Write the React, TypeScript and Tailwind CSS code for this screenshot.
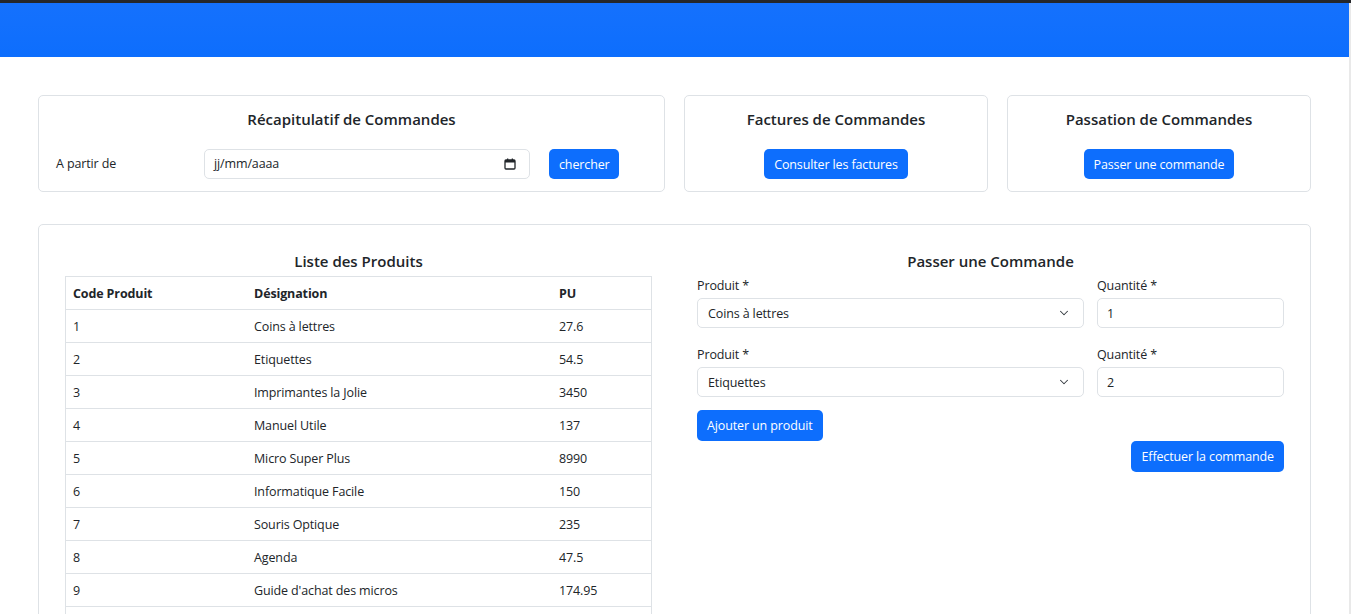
import { ChevronDown } from "lucide-react";

const produits = [
  { code: "1", nom: "Coins à lettres", pu: "27.6" },
  { code: "2", nom: "Etiquettes", pu: "54.5" },
  { code: "3", nom: "Imprimantes la Jolie", pu: "3450" },
  { code: "4", nom: "Manuel Utile", pu: "137" },
  { code: "5", nom: "Micro Super Plus", pu: "8990" },
  { code: "6", nom: "Informatique Facile", pu: "150" },
  { code: "7", nom: "Souris Optique", pu: "235" },
  { code: "8", nom: "Agenda", pu: "47.5" },
  { code: "9", nom: "Guide d'achat des micros", pu: "174.95" },
  { code: "10", nom: "Cartouche d'encre", pu: "42" },
];

const Btn = ({ children, className = "" }: { children: React.ReactNode; className?: string }) => (
  <button className={`bg-[#0d6efd] text-white text-[12.5px] leading-[19px] rounded-[5px] px-[10px] ${className}`}>
    {children}
  </button>
);

const Card = ({ children, className = "" }: { children: React.ReactNode; className?: string }) => (
  <div className={`border border-[#dee2e6] rounded-[5px] bg-white ${className}`}>{children}</div>
);

const Title = ({ children }: { children: React.ReactNode }) => (
  <h5 className="text-[15px] leading-[19px] font-semibold tracking-normal text-center text-[#212529]">{children}</h5>
);

const CalendarIcon = () => (
  <svg width="12" height="12" viewBox="0 0 12 12" fill="none">
    <rect x="1" y="2" width="10" height="9" rx="1" stroke="#212529" strokeWidth="1.3" />
    <rect x="1" y="2" width="10" height="2.5" fill="#212529" />
    <rect x="3" y="0.5" width="1.3" height="2" fill="#212529" />
    <rect x="7.7" y="0.5" width="1.3" height="2" fill="#212529" />
  </svg>
);

const SelectBox = ({ value }: { value: string }) => (
  <div className="h-[30px] border border-[#dee2e6] rounded-[5px] flex items-center justify-between pl-[10px] pr-[12px]">
    <span className="pt-[2px]">{value}</span>
    <ChevronDown className="w-[14px] h-[14px] text-[#343a40]" strokeWidth={1.8} />
  </div>
);

const InputBox = ({ value }: { value: string }) => (
  <div className="h-[30px] border border-[#dee2e6] rounded-[5px] flex items-center pl-[9px] pt-[2px]">{value}</div>
);

const Label = ({ children }: { children: React.ReactNode }) => (
  <label className="block leading-[19px] mb-[3px] pt-[1px] -mt-[1px]">{children}</label>
);

export default function App() {
  return (
    <div className="min-h-screen bg-white text-[#212529] font-['Open_Sans','Noto_Sans',sans-serif] text-[12.5px] tracking-[-0.01em]">
      <div className="h-[3px] bg-[#25272b]" />
      <div className="flex">
        <div className="flex-1">
          <nav className="h-[54px] bg-gradient-to-b from-[#1571fd] to-[#0d6efd]" />
          <main className="px-[38px] pt-[38px] pb-10">
            <div className="grid grid-cols-[627px_1fr_1fr] gap-[19px]">
              <Card className="px-[13px] pt-[14px] pb-[12px]">
                <Title>Récapitulatif de Commandes</Title>
                <div className="flex items-center mt-[20px]">
                  <span className="pl-[4px] w-[152px]">A partir de</span>
                  <div className="w-[326px] h-[30px] border border-[#dee2e6] rounded-[5px] flex items-center justify-between pl-[9px] pr-[13px]">
                    <span>jj/mm/aaaa</span>
                    <CalendarIcon />
                  </div>
                  <Btn className="ml-[19px] h-[30px] w-[70px] px-0">chercher</Btn>
                </div>
              </Card>
              <Card className="px-[13px] pt-[14px] pb-[12px] flex flex-col items-center">
                <Title>Factures de Commandes</Title>
                <Btn className="mt-[20px] h-[30px]">Consulter les factures</Btn>
              </Card>
              <Card className="px-[13px] pt-[14px] pb-[12px] flex flex-col items-center">
                <Title>Passation de Commandes</Title>
                <Btn className="mt-[20px] h-[30px]">Passer une commande</Btn>
              </Card>
            </div>

            <Card className="mt-[32px] px-[26px] pt-[27px] pb-[26px]">
              <div className="grid grid-cols-2 gap-x-[45px] items-start">
                <div>
                  <Title>Liste des Produits</Title>
                  <div className="mt-[5px] border border-[#dee2e6]">
                    <div className="grid grid-cols-[181px_305px_1fr] h-[32px] items-center pt-[3px] font-bold">
                      <div className="pl-[7px]">Code Produit</div>
                      <div className="pl-[7px]">Désignation</div>
                      <div className="pl-[7px]">PU</div>
                    </div>
                    {produits.map((p) => (
                      <div key={p.code} className="grid grid-cols-[181px_305px_1fr] h-[33px] items-center pt-[3px] border-t border-[#dee2e6]">
                        <div className="pl-[7px]">{p.code}</div>
                        <div className="pl-[7px]">{p.nom}</div>
                        <div className="pl-[7px]">{p.pu}</div>
                      </div>
                    ))}
                  </div>
                </div>

                <div>
                  <Title>Passer une Commande</Title>
                  <div className="mt-[5px] grid grid-cols-[387px_1fr] gap-x-[13px]">
                    <div>
                      <Label>Produit *</Label>
                      <SelectBox value="Coins à lettres" />
                    </div>
                    <div>
                      <Label>Quantité *</Label>
                      <InputBox value="1" />
                    </div>
                    <div className="mt-[17px]">
                      <Label>Produit *</Label>
                      <SelectBox value="Etiquettes" />
                    </div>
                    <div className="mt-[17px]">
                      <Label>Quantité *</Label>
                      <InputBox value="2" />
                    </div>
                  </div>
                  <Btn className="mt-[13px] h-[31px]">Ajouter un produit</Btn>
                  <div className="flex justify-end">
                    <Btn className="h-[31px]">Effectuer la commande</Btn>
                  </div>
                </div>
              </div>
            </Card>
          </main>
        </div>
        <div className="w-[2px] bg-[#e9e9e9]" />
      </div>
    </div>
  );
}
